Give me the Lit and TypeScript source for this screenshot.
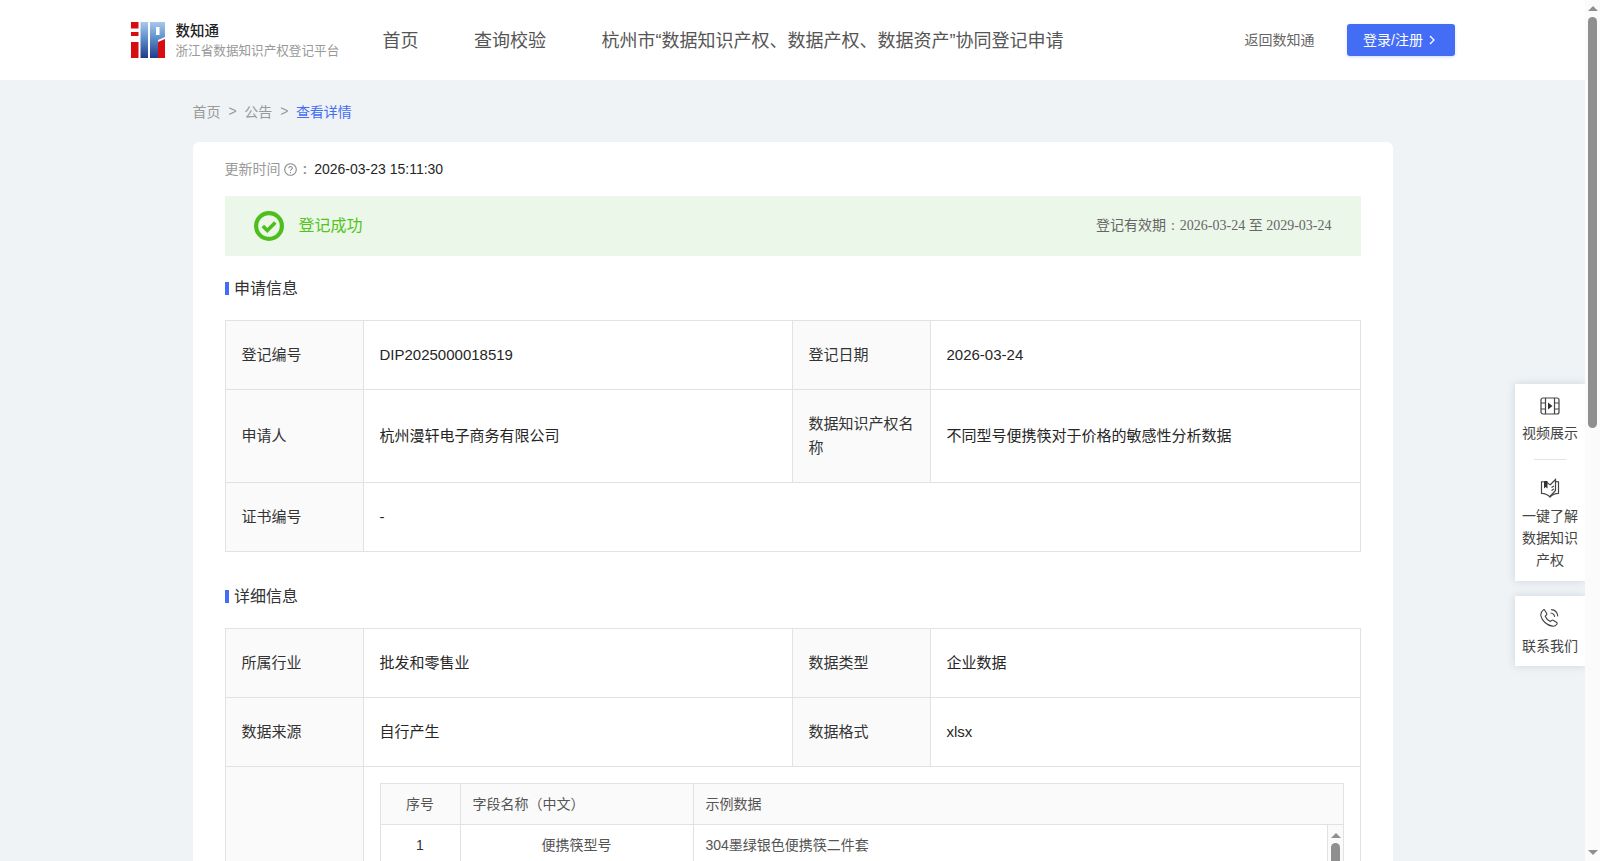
import { LitElement, css, html, svg } from "lit";
import { customElement } from "lit/decorators.js";

const logo = svg`
  <defs>
    <linearGradient id="lg" x1="0" y1="0" x2="0" y2="1">
      <stop offset="0" stop-color="#a9c8ea" />
      <stop offset="0.45" stop-color="#5f8fcb" />
      <stop offset="1" stop-color="#1f3a8a" />
    </linearGradient>
  </defs>
  <rect x="0" y="0" width="7.5" height="6.5" fill="#d80d12" />
  <rect x="0" y="10" width="7.5" height="4" fill="#d80d12" />
  <rect x="0" y="20" width="7.5" height="16" fill="#d80d12" />
  <rect x="9.5" y="0" width="7.5" height="36" fill="url(#lg)" />
  <path d="M19 0h15v15l-7 3v18h-8z" fill="url(#lg)" />
  <rect x="25" y="5" width="3.5" height="8" fill="#fff" />
  <path d="M27 20l7-3v19h-7z" fill="#d80d12" />
`;

@customElement("app-root")
export class AppRoot extends LitElement {
  render() {
    return html`
      <div class="page">
        <header class="top">
          <div class="top-in">
            <div class="brand">
              <svg class="logo" viewBox="0 0 34 36" width="34" height="36">${logo}</svg>
              <div class="brand-text">
                <div class="brand-name">数知通</div>
                <div class="brand-sub">浙江省数据知识产权登记平台</div>
              </div>
            </div>
            <nav class="nav">
              <span>首页</span>
              <span>查询校验</span>
              <span>杭州市“数据知识产权、数据产权、数据资产”协同登记申请</span>
            </nav>
            <span class="back">返回数知通</span>
            <button class="login">
              <span>登录/注册</span>
              <svg width="8" height="12" viewBox="0 0 8 12" fill="none" stroke="#fff" stroke-width="1.3">
                <path d="M2 2l4 4-4 4" />
              </svg>
            </button>
          </div>
        </header>

        <main class="wrap">
          <div class="crumb">
            <span>首页</span><i>&gt;</i><span>公告</span><i>&gt;</i><span class="cur">查看详情</span>
          </div>
          <section class="card">
            <div class="update">
              <span class="muted">更新时间</span>
              <svg class="help" width="13" height="13" viewBox="0 0 13 13" fill="none" stroke="#888" stroke-width="1.1">
                <circle cx="6.500" cy="6.500" r="5.800" />
                <path d="M4.800 5.200c0-2.200 3.500-2.200 3.500-.1 0 1.300-1.800 1.300-1.800 2.700" />
                <path d="M6.500 9v1.200" />
              </svg>
              <span class="muted colon">:</span>
              <span class="when">2026-03-23 15:11:30</span>
            </div>

            <div class="alert">
              <svg width="30" height="30" viewBox="0 0 30 30" fill="none" stroke="#4dbf1c">
                <circle cx="15" cy="15" r="12.900" stroke-width="4.200" />
                <path d="M8.800 15l4.500 4.500 8-8" stroke-width="3.600" />
              </svg>
              <span class="ok">登记成功</span>
              <span class="valid">登记有效期<span class="sep">:</span>2026-03-24 至 2029-03-24</span>
            </div>

            <h3 class="title first">申请信息</h3>
            <table class="info">
              <colgroup><col class="c1" /><col class="c2" /><col class="c3" /><col class="c4" /></colgroup>
              <tr>
                <th>登记编号</th><td>DIP2025000018519</td>
                <th>登记日期</th><td>2026-03-24</td>
              </tr>
              <tr>
                <th>申请人</th><td>杭州漫轩电子商务有限公司</td>
                <th>数据知识产权名称</th><td>不同型号便携筷对于价格的敏感性分析数据</td>
              </tr>
              <tr>
                <th>证书编号</th><td colspan="3">-</td>
              </tr>
            </table>

            <h3 class="title">详细信息</h3>
            <table class="info">
              <colgroup><col class="c1" /><col class="c2" /><col class="c3" /><col class="c4" /></colgroup>
              <tr>
                <th>所属行业</th><td>批发和零售业</td>
                <th>数据类型</th><td>企业数据</td>
              </tr>
              <tr>
                <th>数据来源</th><td>自行产生</td>
                <th>数据格式</th><td>xlsx</td>
              </tr>
              <tr>
                <th></th>
                <td colspan="3" class="holder">
                  <div class="fields">
                    <div class="frow head">
                      <div class="f1">序号</div>
                      <div class="f2">字段名称（中文）</div>
                      <div class="f3">示例数据</div>
                    </div>
                    <div class="fbody">
                      <div class="frow grow">
                        <div class="f1 num">1</div>
                        <div class="f2 mid">便携筷型号</div>
                        <div class="f3">304墨绿银色便携筷二件套</div>
                      </div>
                      <div class="mini-bar">
                        <span class="up small"></span>
                        <span class="mini-thumb"></span>
                      </div>
                    </div>
                  </div>
                </td>
              </tr>
            </table>
          </section>
        </main>

        <aside class="side">
          <div class="box">
            <div class="item">
              <svg width="20" height="18" viewBox="0 0 20 18" fill="none" stroke="#444" stroke-width="1.200">
                <rect x="1" y="1" width="18" height="16" rx="2" />
                <path d="M5.500 1v16M14.500 1v16M1 6h4.500M1 12h4.500M14.500 6H19M14.500 12H19" />
                <path d="M8 5.500l4.500 3.500L8 12.500z" fill="#333" stroke="none" />
              </svg>
              <span>视频展示</span>
            </div>
            <div class="rule"></div>
            <div class="item">
              <svg width="20" height="20" viewBox="0 0 20 20" fill="none" stroke="#444" stroke-width="1.200">
                <path d="M15.500 3.500c.9 0 1.900.1 3 .3v11.500c-3.500.2-6.500 1.400-8.500 3.700-2-2.300-5-3.500-8.500-3.700V3.800c3.500-.3 6.500.7 8.500 3.200" />
                <path d="M10 7l5.500-5.500v11L10 18.500" />
                <path d="M4 3h3.500v7.500L5.700 9 4 10.500z" fill="#333" stroke="none" />
                <path d="M11.500 9.500l2.500-1.500M11.500 12.500l2.500-1.500" />
              </svg>
              <span>一键了解数据知识产权</span>
            </div>
          </div>
          <div class="box last">
            <div class="item">
              <svg width="20" height="20" viewBox="1 1 18 18" fill="none" stroke="#444" stroke-width="1">
                <path d="M5 2.500l2 3.500c.3.600.1 1-.3 1.400l-1 1c.8 2 2.600 3.900 4.600 4.800l1.100-1c.4-.4.900-.5 1.400-.2l3.300 2.100c.5.300.5 1 .1 1.500-1 1.200-2.400 2.100-4 1.700C7 16.800 2.800 12.300 1.800 8 1.400 6 2.500 4 4 2.700c.3-.3.800-.4 1-.2z" />
                <path d="M10.500 5.500c2 .2 3.400 1.600 3.700 3.500M11 2.500c3.400.2 5.700 2.500 6 6" />
              </svg>
              <span>联系我们</span>
            </div>
          </div>
        </aside>
      </div>

      <div class="bar">
        <span class="up"></span>
        <span class="thumb"></span>
        <span class="fill"></span>
        <span class="down"></span>
      </div>
    `;
  }

  static styles = css`
    :host {
      display: flex;
      height: 100vh;
      overflow: hidden;
      font-family: "Liberation Sans", "Noto Sans CJK SC", sans-serif;
      font-size: 14px;
      color: #333;
    }
    .page {
      flex: 1;
      min-width: 0;
      height: 100%;
      overflow: hidden;
      position: relative;
      background: #eff3f6;
    }
    .top {
      height: 80px;
      background: #fff;
    }
    .top-in {
      width: 1324px;
      height: 100%;
      margin: 0 auto;
      display: flex;
      align-items: center;
    }
    .brand {
      display: flex;
      align-items: center;
      width: 252px;
    }
    .brand-text {
      margin-left: 11px;
    }
    .brand-name {
      font-size: 14.5px;
      line-height: 20px;
      font-weight: 500;
      color: #222;
    }
    .brand-sub {
      font-size: 12.600px;
      line-height: 18px;
      color: #999;
      margin-top: 1px;
      white-space: nowrap;
    }
    .nav {
      display: flex;
      gap: 55.500px;
      font-size: 18px;
      color: #555;
      flex: 1;
      white-space: nowrap;
      padding-bottom: 2px;
    }
    .back {
      color: #666;
      margin-right: 32px;
      padding-bottom: 2px;
    }
    .login {
      width: 108px;
      height: 32px;
      border: none;
      border-radius: 3px;
      background: #446df6;
      color: #fff;
      font: inherit;
      display: flex;
      align-items: center;
      justify-content: center;
      gap: 5px;
      padding: 0 2px 0 0;
      box-shadow: 0 1px 3px rgba(68, 109, 246, 0.25);
    }
    .login span {
      margin-top: -2px;
    }
    .wrap {
      width: 1200px;
      margin: 0 auto;
    }
    .crumb {
      display: flex;
      align-items: center;
      height: 61px;
      padding-bottom: 1px;
      color: #999;
    }
    .crumb i {
      font-style: normal;
      margin: 0 7.500px 0 8px;
    }
    .cur {
      color: #446df6;
    }
    .card {
      background: #fff;
      border-radius: 6px;
      padding: 16px 32px 32px;
    }
    .update {
      display: flex;
      align-items: center;
      height: 22px;
    }
    .muted {
      color: #999;
      margin-top: -2px;
    }
    .when {
      color: #262626;
    }
    .help {
      margin-left: 3px;
    }
    .colon {
      margin: 0 7px 0 6px;
      font-weight: 700;
    }
    .alert {
      display: flex;
      align-items: center;
      height: 60px;
      margin-top: 16px;
      padding: 0 29px;
      background: #ebf7e9;
    }
    .ok {
      margin: -5px 0 0 15px;
      font-size: 16px;
      color: #52c41a;
      flex: 1;
    }
    .valid {
      margin-top: -5px;
      font-family: "Liberation Serif", "Noto Sans CJK SC", serif;
      color: #666;
    }
    .sep {
      margin: 0 5px;
    }
    .title {
      margin: 32px 0 19px;
      padding: 1px 0 0 9.500px;
      position: relative;
      font-size: 16px;
      line-height: 24px;
      font-weight: 400;
    }
    .title.first {
      margin-top: 20px;
    }
    .title::before {
      content: "";
      position: absolute;
      left: 0;
      top: 6px;
      width: 4px;
      height: 13px;
      background: #446df6;
    }
    .info {
      width: 1136px;
      table-layout: fixed;
      border-collapse: collapse;
      font-size: 15px;
      line-height: 24px;
    }
    .c1,
    .c3 {
      width: 138px;
    }
    .c2 {
      width: 429px;
    }
    .info th,
    .info td {
      border: 1px solid #e2e2e2;
      padding: 22px 16px;
      font-weight: 400;
      text-align: left;
      vertical-align: middle;
      color: #262626;
    }
    .info th {
      background: #fafafa;
      color: #333;
    }
    .info td.holder {
      padding: 16px;
    }
    .fields {
      border: 1px solid #e2e2e2;
      font-size: 14px;
      color: #555;
    }
    .frow {
      display: flex;
      height: 40px;
      line-height: 40px;
    }
    .head {
      background: #fafafa;
      border-bottom: 1px solid #e2e2e2;
    }
    .f1 {
      width: 79px;
      text-align: center;
      border-right: 1px solid #e2e2e2;
    }
    .f2 {
      width: 216px;
      padding: 0 4px 0 12px;
      border-right: 1px solid #e2e2e2;
    }
    .f3 {
      padding-left: 12px;
      flex: 1;
    }
    .num {
      color: #333;
    }
    .mid {
      text-align: center;
      padding: 0;
      width: 232px;
    }
    .fbody {
      display: flex;
    }
    .grow {
      flex: 1;
    }
    .mini-bar {
      width: 14px;
      background: #fafafa;
      border-left: 1px solid #e2e2e2;
      display: flex;
      flex-direction: column;
      align-items: center;
      padding: 8px 0 0 1px;
      box-sizing: content-box;
    }
    .mini-thumb {
      width: 9px;
      height: 60px;
      margin-top: 5px;
      background: #8f8f8f;
      border-radius: 5px 5px 0 0;
    }
    .side {
      position: absolute;
      right: 0;
      top: 384px;
      width: 70px;
      display: flex;
      flex-direction: column;
      gap: 15px;
    }
    .box {
      background: #fff;
      box-shadow: 0 0 8px rgba(90, 105, 130, 0.22);
      padding: 13px 0 10px;
      text-align: center;
    }
    .box.last {
      padding: 12px 0 9px;
    }
    .item {
      display: flex;
      flex-direction: column;
      align-items: center;
      padding: 0 7px;
      line-height: 22px;
      color: #444;
    }
    .item svg {
      margin-bottom: 7px;
    }
    .rule {
      width: 32px;
      height: 1px;
      margin: 15px auto 18px;
      background: #e2e2e2;
    }
    .bar {
      width: 15px;
      flex: none;
      background: #fbfbfb;
      display: flex;
      flex-direction: column;
      align-items: center;
      padding: 6px 0;
      box-sizing: border-box;
    }
    .up,
    .down {
      width: 0;
      height: 0;
      border-left: 5px solid transparent;
      border-right: 5px solid transparent;
      flex: none;
    }
    .up {
      border-bottom: 5px solid #8f8f8f;
    }
    .down {
      border-top: 5px solid #8f8f8f;
    }
    .thumb {
      width: 9px;
      height: 411px;
      margin-top: 6px;
      background: #8f8f8f;
      border-radius: 5px;
    }
    .fill {
      flex: 1;
    }
  `;
}
